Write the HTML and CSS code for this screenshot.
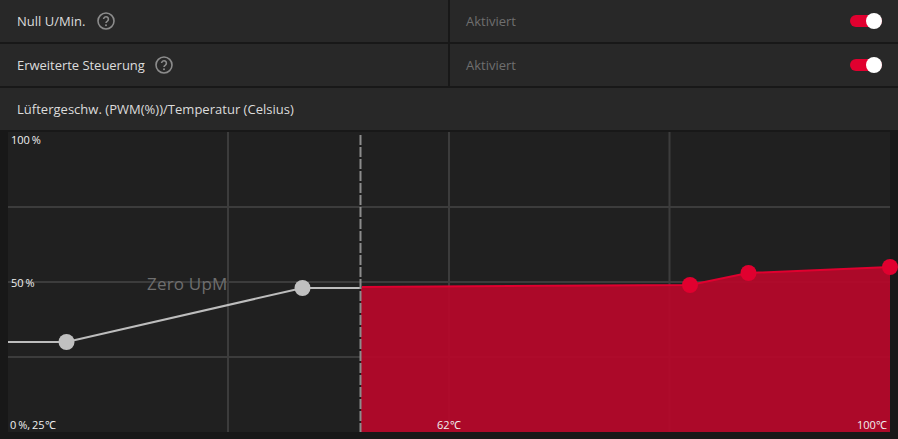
FILE: index.html
```html
<!DOCTYPE html>
<html lang="de">
<head>
<meta charset="utf-8">
<title>Lüfter</title>
<link rel="stylesheet" href="styles.css">
</head>
<body>
<div class="panel">
  <div class="row">
    <div class="cell-left"><span class="label first">Null U/Min.</span>
      <svg class="help" viewBox="0 0 18 18"><circle cx="9" cy="9" r="8" fill="none" stroke="#8c8c8c" stroke-width="1.6"/><path d="M6.6 7.1a2.4 2.4 0 1 1 3.8 2c-.9.6-1.4 1-1.4 2" fill="none" stroke="#8c8c8c" stroke-width="1.6"/><circle cx="9" cy="13.2" r="1" fill="#8c8c8c"/></svg>
    </div>
    <div class="cell-right"><span class="state">Aktiviert</span><span class="toggle"><span class="knob"></span></span></div>
  </div>
  <div class="row">
    <div class="cell-left"><span class="label second">Erweiterte Steuerung</span>
      <svg class="help" viewBox="0 0 18 18"><circle cx="9" cy="9" r="8" fill="none" stroke="#8c8c8c" stroke-width="1.6"/><path d="M6.6 7.1a2.4 2.4 0 1 1 3.8 2c-.9.6-1.4 1-1.4 2" fill="none" stroke="#8c8c8c" stroke-width="1.6"/><circle cx="9" cy="13.2" r="1" fill="#8c8c8c"/></svg>
    </div>
    <div class="cell-right"><span class="state">Aktiviert</span><span class="toggle"><span class="knob"></span></span></div>
  </div>
  <div class="row"><div class="cell-full"><span class="label third">Lüftergeschw. (PWM(%))/Temperatur (Celsius)</span></div></div>
  <div class="chart">
    <svg class="plot" viewBox="0 0 898 300" width="898" height="300">
      <g stroke="#3c3c3c" stroke-width="2" fill="none">
        <path d="M228 0V300M449 0V300M669.500 0V300"/>
        <path d="M8 75H890M8 150H890M8 225H890" />
      </g>
      <path d="M361 155.500L690 153L748 141L890 135V300H361Z" fill="#b8082a" fill-opacity=".92"/>
      <path d="M8 210H66.500L302.500 156H360" fill="none" stroke="#bdbdbd" stroke-width="2"/>
      <path d="M360.500 3V300" stroke="#8c8c8c" stroke-width="2" stroke-dasharray="10 2" fill="none"/>
      <path d="M362 155L690 153L748 141L890 135" fill="none" stroke="#e0002f" stroke-width="2"/>
      <g fill="#c0c0c0"><circle cx="66.500" cy="210" r="8"/><circle cx="302.500" cy="156" r="8"/></g>
      <g fill="#e0002f"><circle cx="690" cy="153" r="8"/><circle cx="748.500" cy="141" r="8"/><circle cx="890" cy="135" r="8"/></g>
    </svg>
    <span class="axis y100">100 %</span>
    <span class="axis y50">50 %</span>
    <span class="axis y0">0 %, 25℃</span>
    <span class="axis x62">62℃</span>
    <span class="axis x100">100℃</span>
    <span class="zero">Zero UpM</span>
  </div>
</div>
</body>
</html>
```
FILE: styles.css
```css
* { box-sizing: border-box; }
html, body { margin: 0; padding: 0; }
body {
  width: 898px;
  height: 439px;
  background: #181818;
  overflow: hidden;
  font-family: "Open Sans", "Liberation Sans", sans-serif;
}
.panel { display: flex; flex-direction: column; gap: 2px; }
.row { display: flex; gap: 2px; height: 42px; }
.cell-left, .cell-right, .cell-full {
  display: flex;
  align-items: center;
  background: #282828;
  padding-left: 17px;
}
.cell-left { width: 448px; }
.cell-right { flex: 1; padding-left: 16px; padding-right: 16px; justify-content: space-between; }
.cell-full { flex: 1; }
.label { color: #dcdcdc; font-size: 13px; }
.first { width: 70px; }
.second { width: 128px; letter-spacing: -.03px; }
.third { letter-spacing: .02px; }
.state { color: #6f6f6f; font-size: 13px; }
.help { width: 18px; height: 18px; margin-left: 10px; }
.toggle {
  position: relative;
  width: 32px;
  height: 12px;
  border-radius: 6px;
  background: #e0002f;
}
.knob {
  position: absolute;
  right: 0;
  top: -2px;
  width: 16px;
  height: 16px;
  border-radius: 50%;
  background: #fff;
}
.chart { position: relative; height: 307px; }
.plot { display: block; }
.chart::before {
  content: "";
  position: absolute;
  z-index: -1;
  left: 8px;
  top: 0;
  width: 882px;
  height: 300px;
  background: #202020;
}
.axis { position: absolute; color: #f0f0f0; font-size: 11px; line-height: 14px; word-spacing: -1px; }
.y100 { left: 11px; top: 1px; }
.y50 { left: 11px; top: 144px; }
.y0 { left: 10px; top: 286px; }
.x62 { left: 437px; top: 286px; }
.x100 { left: 857px; top: 286px; }
.zero { position: absolute; left: 147px; top: 141px; color: #6e6e6e; font-size: 17px; line-height: 22px; letter-spacing: .2px; }
```
